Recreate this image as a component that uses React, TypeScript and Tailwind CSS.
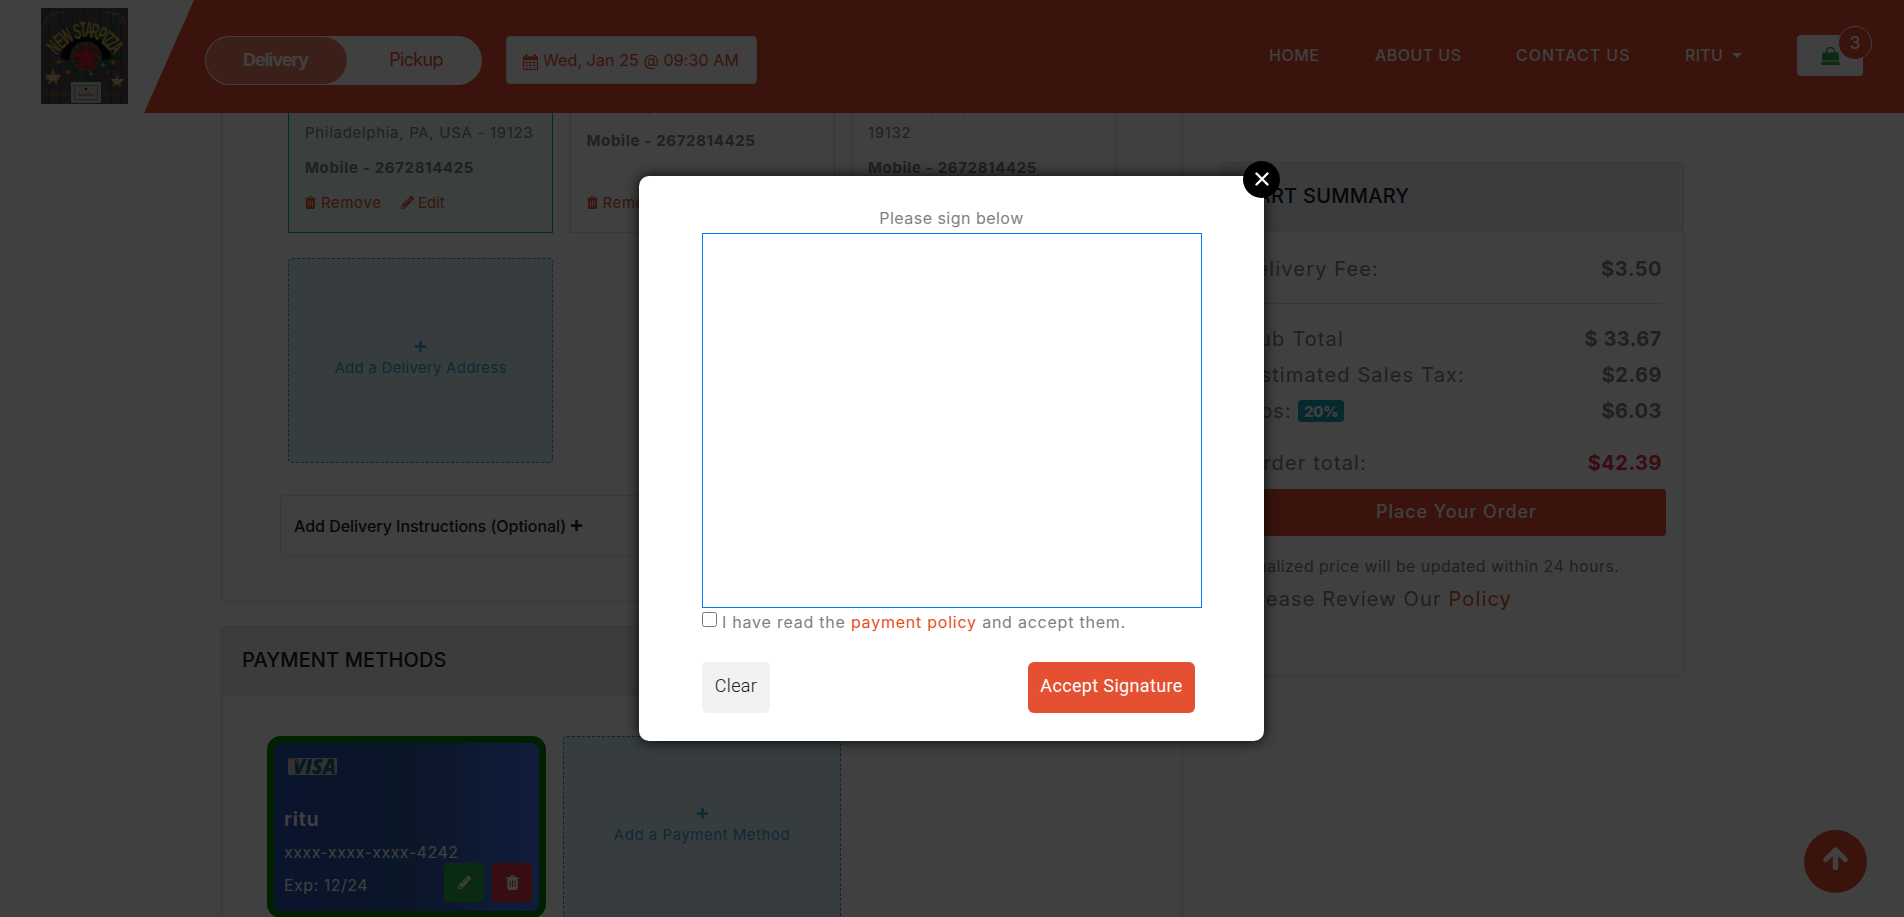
import type { ReactNode } from "react";
import { FaPencilAlt, FaPlus } from "react-icons/fa";

function TrashIcon({ className }: { className: string }) {
  return (
    <svg viewBox="0 0 11 13" className={className} fill="currentColor">
      <path
        fillRule="evenodd"
        d="M3.2 2 3.8.7C4 .3 4.300 0 4.800 0h1.400c.5 0 .8.3 1 .7L7.800 2H10.700c.2 0 .3.1.3.3v.4c0 .2-.1.3-.3.3H10v8.200c0 1-.6 1.800-1.400 1.800H2.400C1.600 13 1 12.200 1 11.200V3H.3C.1 3 0 2.900 0 2.700v-.4C0 2.100.1 2 .3 2ZM4.300 2h2.400l-.4-.9H4.700ZM3 4.500v6h.8v-6Zm2.100 0v6h.8v-6Zm2.100 0v6H8v-6Z"
      />
    </svg>
  );
}

function CalendarIcon() {
  return (
    <svg viewBox="0 0 15 16" className="h-4 w-[15px]" fill="currentColor">
      <path
        fillRule="evenodd"
        d="M0 3.500C0 2.700.5 2.200 1.200 2.200H2V1.500C2 .7 2.600 0 3.300 0s1.400.7 1.400 1.500v.7h5.600v-.7C10.300.7 11 0 11.700 0S13 .7 13 1.500v.7h.8c.7 0 1.200.5 1.200 1.300v11.300c0 .7-.5 1.200-1.200 1.200H1.200C.5 16 0 15.500 0 14.800ZM1.100 6v2.300h2.500V6Zm3.100 0v2.300h3V6Zm3.600 0v2.300h3V6Zm3.600 0v2.300h2.500V6ZM1.100 8.900v2.500h2.500V8.900Zm3.100 0v2.500h3V8.900Zm3.600 0v2.500h3V8.900Zm3.600 0v2.500h2.500V8.900ZM1.100 12v2.900h2.500V12Zm3.100 0v2.900h3V12Zm3.600 0v2.900h3V12Zm3.600 0v2.900h2.500V12ZM3 1.500v2.300h.6V1.500Zm8.400 0v2.300h.6V1.500Z"
      />
    </svg>
  );
}

const logoLetters: [string, number, number, number][] = [
  ["N", 12, 39, -48],
  ["E", 18, 33, -42],
  ["W", 25, 28, -34],
  ["S", 36, 23, -12],
  ["T", 42, 21, -4],
  ["A", 48, 21, 4],
  ["R", 54, 23, 12],
  ["P", 61, 26, 26],
  ["I", 65, 28, 32],
  ["Z", 68, 31, 37],
  ["Z", 72, 35, 43],
  ["A", 76, 39, 48],
];

function Logo() {
  return (
    <svg viewBox="0 0 87 96" className="ml-[41px] h-24 w-[87px] shrink-0">
      <rect width="87" height="96" fill="#4c4c4c" />
      <path d="M8 0v96M19 0v96M31 0v96M44 0v96M58 0v96M70 0v96M80 0v96" stroke="#404040" strokeWidth="2" />
      <g fill="none" stroke="#a88438" strokeWidth="1">
        <path d="M3 18c0-9 4-13 20-14M4 12c5-3 6 3 2 4M10 5c3 4 7 2 6-1M84 18c0-9-4-13-20-14M83 12c-5-3-6 3-2 4M77 5c-3 4-7 2-6-1" />
      </g>
      <path
        d="m45 10 5 15 11-13 0 15 16-14-6 18 11 2-9 9 9 9-12 2 8 11-13-4 0 12-9-8-8 11-5-11-10 7 2-12-13 3 8-10-12-4 12-5-13-6 10-3-8-20 15 10 0-15 9 15Z"
        fill="#1d4f3f"
      />
      <path d="M20 50a25 22 0 0 1 50 0l-8 3a17 16 0 0 0-34 0Z" fill="#0b0b0b" />
      <circle cx="45" cy="49" r="15" fill="#6d3420" stroke="#25624a" strokeWidth="1.500" />
      <circle cx="45" cy="49" r="13" fill="none" stroke="#a25a2c" strokeWidth="2" strokeDasharray="3 2" />
      <path d="m45 35 3.500 10H60l-9 6.500L54.500 63 45 56l-9.500 7L39 51.500 30 45h11.500Z" fill="#c81c34" />
      <g fill="#d0a444" fontFamily="'Liberation Sans', Arial, sans-serif" fontWeight="700" fontSize="22" textAnchor="middle">
        {logoLetters.map(([letter, x, y, turn], i) => (
          <text key={i} transform={`translate(${x} ${y}) rotate(${turn}) scale(0.5 1)`} y="8">
            {letter}
          </text>
        ))}
      </g>
      <g fill="#c9a13e">
        <path d="m12 60 2.200 6.500H21l-5.500 4 2 6.500-5.500-4-5.500 4 2-6.500-5.500-4h6.800ZM76 66l1.800 5H83l-4.200 3.200 1.500 5-4.300-3-4.300 3 1.500-5L69 71h5.200Z" />
        <path d="m18 50 .8 3.200L22 54l-3.200.8L18 58l-.8-3.200L14 54l3.200-.8ZM27 60l.8 3.200L31 64l-3.200.8L27 68l-.8-3.200L23 64l3.200-.8ZM72 50l.8 3.200L76 54l-3.200.8L72 58l-.8-3.200L68 54l3.200-.8ZM62 53l.8 3.200L66 57l-3.200.8L62 61l-.8-3.200L58 57l3.200-.8ZM50 62l.8 3.200L54 66l-3.200.8L50 70l-.8-3.200L46 66l3.200-.8Z" />
      </g>
      <g fontFamily="'Liberation Sans', Arial, sans-serif" fontWeight="700">
        <text x="5" y="72" fontSize="5" fill="#d8d8d8" textLength="14">BEST</text>
        <text x="71" y="75" fontSize="5" fill="#d8d8d8" textLength="11">TOP</text>
        <text x="56" y="66" fontSize="5" fill="#b8304c" textLength="24" transform="rotate(-5 68 66)">Since 1984</text>
        <text x="3" y="88" fontSize="8" fontWeight="400" fill="#8a6c28" textLength="25" lengthAdjust="spacingAndGlyphs">Strawberry Square</text>
        <text x="62" y="88" fontSize="8" fontWeight="400" fill="#8a6c28" textLength="20" lengthAdjust="spacingAndGlyphs">Shopping Center</text>
      </g>
      <rect x="30" y="74" width="30" height="21" fill="#c4c4bc" />
      <rect x="33.500" y="77.500" width="23" height="14" fill="none" stroke="#77776f" strokeWidth="0.800" />
      <circle cx="45" cy="81" r="1.300" fill="#333" />
      <text x="38" y="87.500" fontSize="4" fontWeight="700" fill="#b81c30" textLength="14" lengthAdjust="spacingAndGlyphs" fontFamily="'Liberation Sans', Arial, sans-serif">New Star Pizza</text>
    </svg>
  );
}

function VisaLogo() {
  return (
    <svg viewBox="0 0 49 17" className="h-[17px] w-[49px]">
      <rect width="49" height="17" rx="2" fill="#c8c8c8" />
      <text x="5" y="16" fontFamily="'Open Sans', sans-serif" fontWeight="800" fontStyle="italic" fontSize="21" textLength="43" lengthAdjust="spacingAndGlyphs" fill="#14608c">
        VISA
      </text>
      <path d="M2 0h6.500l2.500 9C9.500 4.500 7 2 2 0Z" fill="#f0a020" />
    </svg>
  );
}

function BagIcon() {
  return (
    <svg viewBox="0 0 19 18" className="ml-6 h-[18px] w-[19px]" fill="#28a745">
      <path d="M5.500 7V4a4 3.500 0 0 1 8 0v3" fill="none" stroke="#28a745" strokeWidth="1.500" />
      <path d="M1.500 5.500h16l.8 8H.7ZM.5 14.600h18V18H.5Z" />
    </svg>
  );
}

function Header() {
  return (
    <header className="flex h-[113px] w-full">
      <div className="flex w-[144px] shrink-0 pt-2">
        <Logo />
      </div>
      <div className="flex flex-1 bg-[#e65032] pl-[61px] text-white [clip-path:polygon(50px_0,100%_0,100%_100%,0_100%)]">
        <div className="mt-9 flex h-[49px] w-[277px] rounded-full bg-white p-px text-[18px]">
          <div className="flex w-[141px] items-center justify-center rounded-full bg-[#ec7c65] pr-0.5 pb-0.5 font-bold tracking-[-1px]">Delivery</div>
          <div className="flex flex-1 items-center justify-center pb-0.5 pl-1 tracking-[-0.700px] text-[#e65032]">Pickup</div>
        </div>
        <div className="mt-9 ml-6 flex h-12 w-[251px] items-center gap-[5px] rounded border border-[#dee2e6] bg-white pb-px pl-4 text-base tracking-[0.100px] whitespace-nowrap text-[#e65032]">
          <span className="mt-1"><CalendarIcon /></span>
          Wed, Jan 25 @ 09:30 AM
        </div>
        <nav className="mt-[35px] ml-auto flex h-10 items-center text-base font-medium whitespace-nowrap">
          <span className="w-[106px] tracking-[0.500px]">HOME</span>
          <span className="w-[141px] tracking-[0.450px]">ABOUT US</span>
          <span className="w-[169px] tracking-[1px]">CONTACT US</span>
          <span className="w-[47px] tracking-[0.300px]">RITU</span>
          <svg viewBox="0 0 10 5" className="h-[5px] w-[10px]" fill="currentColor">
            <path d="M0 0h10L5 5Z" />
          </svg>
        </nav>
        <div className="relative mt-[35px] mr-[41px] ml-[55px] flex h-[41px] w-[66px] items-center rounded bg-white">
          <BagIcon />
          <span className="absolute -top-[9px] left-[41px] flex size-[34px] items-center justify-center rounded-full border border-white bg-[#e65032] pt-0.5 text-[17px] font-medium">3</span>
        </div>
      </div>
    </header>
  );
}

const line = "h-[27px] shrink-0 leading-[27px] tracking-[0.700px] whitespace-nowrap";
const mobile = "mt-2 h-[27px] shrink-0 leading-[27px] font-bold tracking-[0.650px] whitespace-nowrap";

function CardActions() {
  return (
    <div className="mt-2 flex h-[27px] shrink-0 items-center text-[#e65032]">
      <TrashIcon className="h-[13px] w-[11px]" />
      <span className="mt-px ml-[5px] w-[80px] tracking-[0.600px]">Remove</span>
      <FaPencilAlt className="size-[13px]" />
      <span className="mt-px ml-1">Edit</span>
    </div>
  );
}

function AddressCard({ children, tone }: { children: ReactNode; tone: string }) {
  return (
    <div className={`flex h-[120px] w-[265px] flex-col justify-end overflow-hidden border border-t-0 pb-4 pl-4 text-[15px] ${tone}`}>
      {children}
      <CardActions />
    </div>
  );
}

function PanelTitle({ children, inset }: { children: ReactNode; inset: string }) {
  return (
    <h2 className={`flex h-[69px] items-center border-b border-[#dcdfea] bg-[#e9edf7] pb-0.5 text-xl font-medium text-[#212121] ${inset}`}>{children}</h2>
  );
}

function AddTile({ label, size }: { label: string; size: string }) {
  return (
    <div className={`flex flex-col items-center border border-dashed border-[#2a9fc8] bg-[#dcf0f8] text-[15px] text-[#3aa4cc] ${size}`}>
      <FaPlus className="size-[13px]" />
      <span className="mt-1">{label}</span>
    </div>
  );
}

function PaymentCard() {
  return (
    <div className="h-[182px] w-[279px] rounded-[14px] border-[7px] border-[#008000] bg-linear-to-r from-[#2850b4] via-[#2c58a0] to-[#4870f0] pl-[10px] text-white">
      <div className="mt-[15px] h-[17px] pl-1"><VisaLogo /></div>
      <div className="mt-[27px] h-[34px] text-xl leading-[34px] font-semibold tracking-[0.700px]">ritu</div>
      <div className="h-[32px] leading-[32px] tracking-[0.500px]">xxxx-xxxx-xxxx-4242</div>
      <div className="flex">
        <span className="h-[34px] w-[160px] leading-[34px] tracking-[0.500px]">Exp: 12/24</span>
        <span className="-mt-[5px] flex h-[39px] w-10 items-center justify-center rounded bg-[#28a745]"><FaPencilAlt className="size-[13px]" /></span>
        <span className="-mt-[5px] ml-2 flex h-[39px] w-10 items-center justify-center rounded bg-[#dc3545]"><TrashIcon className="h-[15px] w-[13px]" /></span>
      </div>
    </div>
  );
}

function CheckoutColumn() {
  return (
    <div className="w-[962px] shrink-0">
      <section className="h-[489px] rounded-b border border-t-0 border-[#dfdfe2]">
        <div className="flex gap-[16.500px] pl-[66px]">
          <AddressCard tone="border-[#00b080] bg-[#e9fcf5]">
            <div className={line}>Philadelphia, PA, USA - 19123</div>
            <div className={mobile}>Mobile - 2672814425</div>
          </AddressCard>
          <AddressCard tone="border-[#dfdfdf]">
            <div className={line}>Philadelphia, PA, USA - 19132</div>
            <div className={mobile}>Mobile - 2672814425</div>
            <div className="h-[27px] shrink-0" />
          </AddressCard>
          <AddressCard tone="border-[#dfdfdf]">
            <div className={line}>Philadelphia, PA, USA -</div>
            <div className={line}>19132</div>
            <div className={mobile}>Mobile - 2672814425</div>
          </AddressCard>
        </div>
        <div className="mt-[25px] ml-[66px]">
          <AddTile label="Add a Delivery Address" size="h-[205px] w-[265px] rounded pt-[81px] tracking-[0.260px]" />
        </div>
        <div className="mt-8 mr-[57px] ml-[58px] flex h-[61px] items-center gap-1 rounded border border-[#dfdfdf] pl-[13px] font-medium tracking-[-0.030px] text-[#212121]">
          Add Delivery Instructions (Optional)
          <FaPlus className="size-[13px]" />
        </div>
      </section>
      <section className="mt-6 h-[400px] rounded-t border border-[#dfdfe2]">
        <PanelTitle inset="pl-[20px] tracking-[0.120px]">PAYMENT METHODS</PanelTitle>
        <div className="mt-10 ml-[45px] flex gap-[17px]">
          <PaymentCard />
          <AddTile label="Add a Payment Method" size="h-[200px] w-[278px] rounded pt-[70px] tracking-[0.520px]" />
        </div>
      </section>
    </div>
  );
}

function Row({ label, width, value, tone, children }: { label: string; width: string; value: string; tone: string; children?: ReactNode }) {
  return (
    <div className="flex h-9 items-center whitespace-nowrap">
      <span className={`flex justify-end ${width}`}>{label}</span>
      {children}
      <span className={`ml-auto font-bold tracking-[0.500px] ${tone}`}>{value}</span>
    </div>
  );
}

function CartSummary() {
  return (
    <aside className="mt-[49px] ml-[38px] h-[514px] w-[463px] rounded border border-[#dfdfe2] text-xl tracking-[1.150px]">
      <PanelTitle inset="pl-[20px] tracking-[0.250px]">CART SUMMARY</PanelTitle>
      <div className="mt-[19px] mr-[21px] ml-[21px]">
        <Row label="Delivery Fee:" width="w-[136px]" value="$3.50" tone="" />
        <div className="mt-4 mb-[17px] border-t border-[#dcdcdc]" />
        <Row label="Sub Total" width="w-[101px]" value="$ 33.67" tone="" />
        <Row label="Estimated Sales Tax:" width="w-[222px]" value="$2.69" tone="" />
        <Row label="Tips:" width="w-[49px]" value="$6.03" tone="">
          <span className="ml-1.5 flex h-[22px] w-[46px] items-center justify-center rounded bg-[#17a2b8] text-[15px] font-extrabold tracking-[-0.500px] text-white">20%</span>
        </Row>
        <div className="mt-4">
          <Row label="Order total:" width="w-[124px]" value="$42.39" tone="text-[#dc3545]" />
        </div>
      </div>
      <button className="mt-2 ml-[17px] flex h-[47px] w-[427px] items-center justify-center rounded bg-[#e65032] pb-0.5 pl-2 text-[18px] font-medium tracking-[0.960px] text-white">Place Your Order</button>
      <p className="mt-[14px] ml-[21px] h-8 w-[373px] text-right text-base leading-8 tracking-[0.430px] whitespace-nowrap">Finalized price will be updated within 24 hours.</p>
      <p className="ml-[21px] h-[34px] w-[269px] text-right leading-[34px] whitespace-nowrap">
        Please Review Our <span className="text-[#e65022]">Policy</span>
      </p>
    </aside>
  );
}

function SignatureModal() {
  return (
    <div className="relative mt-[176px] mr-px h-[565px] w-[625px] rounded-[10px] bg-white px-[63px] pt-[27px] text-base text-[#808080] shadow-[0_0_14px_rgba(0,0,0,0.900)]">
      <div className="h-[30px] text-center leading-[30px] tracking-[0.480px]">Please sign below</div>
      <canvas className="block h-[375px] w-[500px] border border-[#007bff]" />
      <label className="flex h-[30px] gap-[5px] leading-[28px] tracking-[0.770px] whitespace-nowrap">
        <input type="checkbox" className="mt-1 size-[15px] shrink-0" />
        <span>
          I have read the <span className="text-[#e65022]">payment policy</span> and accept them.
        </span>
      </label>
      <div className="mt-6 flex w-[493px] justify-between font-['Roboto',sans-serif] text-[18px]">
        <button className="h-[51px] w-[68px] rounded-md bg-[#f1f1f1] pb-1 font-light tracking-[0.370px] text-[#222]">Clear</button>
        <button className="h-[51px] w-[167px] rounded-md bg-[#e65032] pb-1 tracking-[0.350px] text-white">Accept Signature</button>
      </div>
      <button className="absolute -top-[15px] left-[604px] flex size-[37px] items-center justify-center rounded-full bg-black pb-px">
        <svg viewBox="0 0 14 14" className="size-[14px]" stroke="#fff" strokeWidth="2.400" strokeLinecap="round">
          <path d="m1.500 1.500 11 11m0-11-11 11" />
        </svg>
      </button>
    </div>
  );
}

export default function App() {
  return (
    <div className="relative h-[917px] w-[1904px] overflow-hidden bg-white font-['Inter',sans-serif] text-[#808080]">
      <Header />
      <main className="flex pl-[221px]">
        <CheckoutColumn />
        <CartSummary />
      </main>
      <button className="absolute top-[830px] left-[1804px] flex size-[63px] items-center justify-center rounded-full bg-[#e65032] pb-1.5 text-white">
        <svg viewBox="0 0 25 23" className="h-[23px] w-[25px]" fill="none" stroke="currentColor">
          <path d="M12.500 20.500V4" strokeWidth="5.500" strokeLinecap="round" />
          <path d="m2.800 12.500 9.700-9.600 9.700 9.600" strokeWidth="5" strokeLinecap="round" strokeLinejoin="round" />
        </svg>
      </button>
      <div className="absolute inset-0 flex items-start justify-center bg-black/75">
        <SignatureModal />
      </div>
    </div>
  );
}
